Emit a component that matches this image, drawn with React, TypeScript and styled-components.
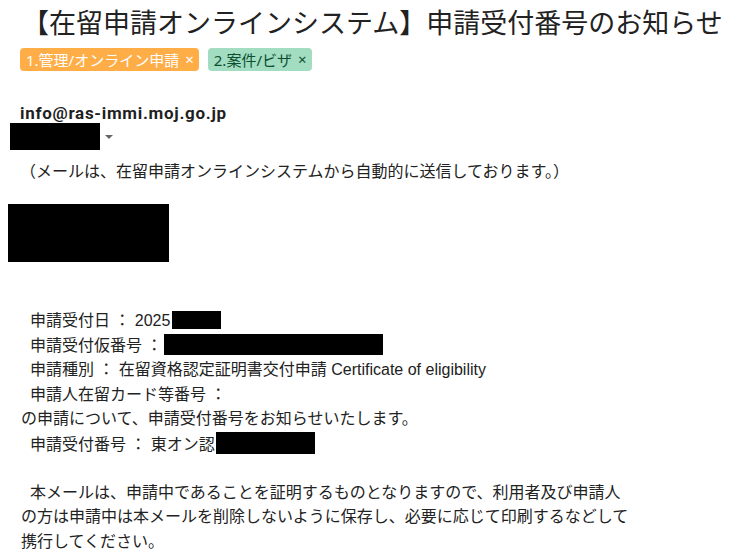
import styled, { createGlobalStyle } from "styled-components";

const GlobalStyle = createGlobalStyle`
  body {
    margin: 0;
    background: #fff;
    color: #222;
    font-family: Arial, "Liberation Sans", "Noto Sans CJK JP", sans-serif;
  }
`;

const Page = styled.div`
  width: 738px;
  height: 552px;
  overflow: hidden;
  padding-top: 4px;
  box-sizing: border-box;
`;

const Subject = styled.h2`
  margin: 0 0 0 22px;
  font-family: "Noto Sans CJK JP", sans-serif;
  font-weight: 400;
  font-size: 27px;
  line-height: 36px;
  color: #222;
  white-space: nowrap;
`;

const Labels = styled.div`
  display: flex;
  gap: 9px;
  margin: 8px 0 0 20px;
`;

const Label = styled.span<{ $bg: string; $fg: string }>`
  display: inline-flex;
  align-items: center;
  gap: 6px;
  height: 23px;
  padding: 0 5px 0 6px;
  border-radius: 4px;
  background: ${(p) => p.$bg};
  color: ${(p) => p.$fg};
  font-family: "Noto Sans", "Noto Sans CJK JP", sans-serif;
  font-size: 15px;
  white-space: nowrap;
`;

const Close = styled.span`
  font-size: 15px;
  line-height: 1;
`;

const Sender = styled.div`
  margin: 32px 0 0 20px;
  font-family: Roboto, "Liberation Sans", sans-serif;
  font-weight: 700;
  font-size: 17px;
  letter-spacing: 0.7px;
  line-height: 20px;
  color: #1f1f1f;
`;

const RecipientRow = styled.div`
  display: flex;
  align-items: center;
  gap: 5px;
  margin-left: 10px;
`;

const Redact = styled.span<{ $w: number; $h: number; $ml?: number; $va?: number }>`
  display: inline-block;
  width: ${(p) => p.$w}px;
  height: ${(p) => p.$h}px;
  margin-left: ${(p) => p.$ml ?? 0}px;
  background: #000;
  vertical-align: ${(p) => p.$va ?? 0}px;
`;

const Caret = styled.span`
  width: 0;
  height: 0;
  border-left: 4.5px solid transparent;
  border-right: 4.5px solid transparent;
  border-top: 4.5px solid #666;
  margin-top: 1px;
`;

const Notice = styled.div`
  margin: 10px 0 0 20px;
  font-size: 16px;
  line-height: 24px;
`;

const Block = styled.div`
  margin: 20px 0 0 8px;
  line-height: 0;
`;

const Body = styled.div`
  margin: 47px 0 0 21px;
  font-size: 16px;
  white-space: pre-wrap;
`;

const Line = styled.div`
  height: 24.5px;
  line-height: 24.5px;
`;

export default function App() {
  return (
    <>
      <GlobalStyle />
      <Page>
        <Subject>【在留申請オンラインシステム】申請受付番号のお知らせ</Subject>
        <Labels>
          <Label $bg="#ffad47" $fg="#fff">
            1.管理/オンライン申請<Close>×</Close>
          </Label>
          <Label $bg="#a2dcc1" $fg="#0b4f30">
            2.案件/ビザ<Close>×</Close>
          </Label>
        </Labels>
        <Sender>info@ras-immi.moj.go.jp</Sender>
        <RecipientRow>
          <Redact $w={90} $h={27} />
          <Caret />
        </RecipientRow>
        <Notice>（メールは、在留申請オンラインシステムから自動的に送信しております。）</Notice>
        <Block>
          <Redact $w={161} $h={58} />
        </Block>
        <Body>
          <Line>
            {"  申請受付日 ： 2025"}
            <Redact $w={49} $h={18} $ml={2} $va={-3} />
          </Line>
          <Line>
            {"  申請受付仮番号 ："}
            <Redact $w={219} $h={21} $ml={2} $va={-4} />
          </Line>
          <Line>{"  申請種別 ： 在留資格認定証明書交付申請 Certificate of eligibility"}</Line>
          <Line>{"  申請人在留カード等番号 ："}</Line>
          <Line>の申請について、申請受付番号をお知らせいたします。</Line>
          <Line>
            {"  申請受付番号 ： 東オン認"}
            <Redact $w={99} $h={22} $ml={1} $va={-4} />
          </Line>
          <Line />
          <Line>{"  本メールは、申請中であることを証明するものとなりますので、利用者及び申請人"}</Line>
          <Line>の方は申請中は本メールを削除しないように保存し、必要に応じて印刷するなどして</Line>
          <Line>携行してください。</Line>
        </Body>
      </Page>
    </>
  );
}
